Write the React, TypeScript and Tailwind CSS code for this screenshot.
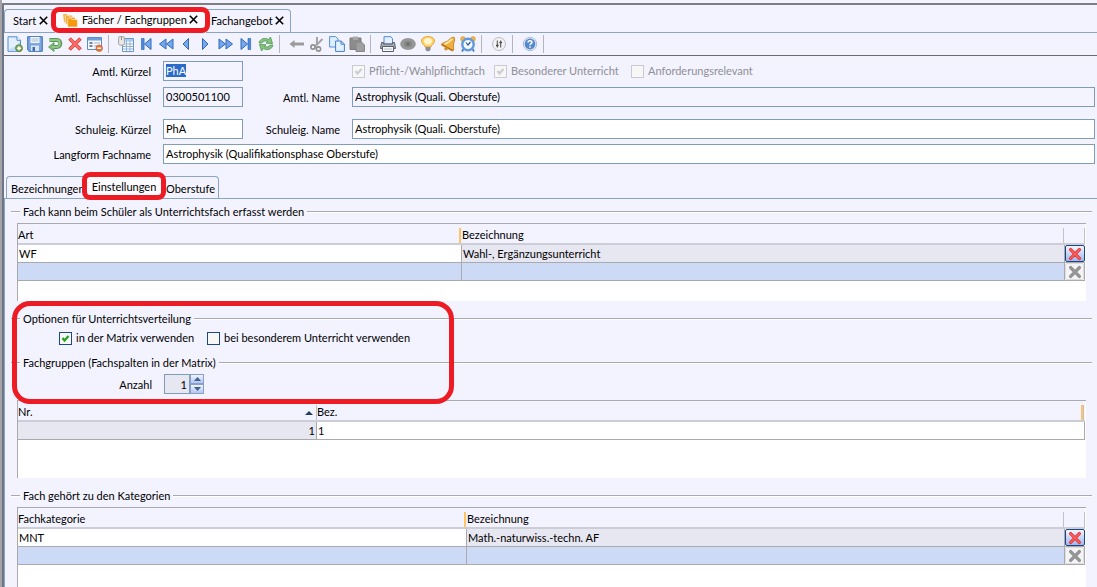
import { useEffect, useRef, type ReactNode } from "react";

function Icon({ children, size = 16 }: { children: ReactNode; size?: number }) {
  return (
    <svg viewBox="0 0 16 16" width={size} height={size} fill="none" aria-hidden="true" className="shrink-0">
      {children}
    </svg>
  );
}

const LIGHT = "#75a8ea";
const EDGE = "#2f68bd";

const icons: Record<string, ReactNode> = {
  Neu: (
    <>
      <path d="M1 .8h9l3.500 3.500v11H1z" fill="#e3effc" stroke="#4f8fd6" />
      <path d="M10 .8v3.500h3.500" fill="#fff" stroke="#4f8fd6" />
      <path d="M2 13c4-1 9-4 11-8v9.500H2z" fill="#c4dcf6" />
      <circle cx="12" cy="12.200" r="3.500" fill="#7fa860" stroke="#4c7f2c" strokeWidth=".7" />
      <path d="M12 10.200v4M10 12.200h4" stroke="#fff" strokeWidth="1.400" />
    </>
  ),
  Speichern: (
    <>
      <path d="M.7.7h14.600v14.600H2L.7 14z" fill="#7ba6e2" stroke="#3a6eb8" />
      <path d="M3.500 1h9v6h-9z" fill="#f4f8fd" />
      <path d="M4.500 3h7M4.500 5h7" stroke="#a9b9cc" />
      <path d="M4 9.500h8V15H4z" fill="#dbe5f0" />
      <path d="M5.500 11H8v4H5.500z" fill="#3e6ca8" />
    </>
  ),
  Rückgängig: (
    <>
      <path d="M2.500 4H10c4.500 0 4.500 7 0 7H6" stroke="#5b9457" strokeWidth="3.800" />
      <path d="M7 6.500v9L1.500 11z" fill="#7db676" stroke="#5b9457" strokeWidth=".8" />
      <path d="M3 4h7c4 0 4 7 0 7H5" stroke="#8fc787" strokeWidth="1.800" />
    </>
  ),
  Löschen: (
    <>
      <path d="M2.500 2.500l11 11M13.500 2.500l-11 11" stroke="#e04040" strokeWidth="3.600" />
      <path d="M3 3l10 10M13 3L3 13" stroke="#ff6f68" strokeWidth="1.800" />
    </>
  ),
  Eintrag: (
    <>
      <path d="M.5 1.500h14v12H.5z" fill="#f4f8fd" stroke="#5f8cc4" />
      <path d="M1 2h13v2.500H1z" fill="#6f9ed8" />
      <path d="M2.500 7h3M2.500 10h3" stroke="#4b5f80" strokeWidth="1.500" />
      <path d="M7 7h6M7 10h3" stroke="#a5b6cc" />
      <circle cx="12.200" cy="12.200" r="3.300" fill="#e0763e" stroke="#c25a2c" strokeWidth=".6" />
      <path d="M10.300 12.200h3.800" stroke="#fff" strokeWidth="1.400" />
    </>
  ),
  Tabelle: (
    <>
      <path d="M4.500 2.500h11v13h-11z" fill="#fff" stroke="#6b96cc" />
      <path d="M5 3h10v2.500H5z" fill="#a9c8ec" />
      <path d="M5 8h10M5 10.500h10M5 13h10M8.500 5v10M12 5v10" stroke="#8fb1da" />
      <rect x=".6" y=".6" width="5.800" height="8.500" rx="1.500" fill="#e9e9e9" stroke="#a2a2a2" />
      <path d="M3.500 1v3" stroke="#8c8c8c" />
    </>
  ),
  Anfang: (
    <>
      <path d="M3.500 2.500h2.600v11H3.500z" fill="#4f8bdc" stroke={EDGE} strokeWidth=".7" />
      <path d="M13 2.500v11L6.500 8z" fill={LIGHT} stroke={EDGE} />
    </>
  ),
  Zurückspulen: <path d="M8 3v10L1.500 8zM15 3v10L8.500 8z" fill={LIGHT} stroke={EDGE} />,
  Zurück: <path d="M10.500 2.500v11L5 8z" fill={LIGHT} stroke={EDGE} />,
  Vor: <path d="M4.500 2.500v11L10 8z" fill={LIGHT} stroke={EDGE} />,
  Vorspulen: <path d="M1 3v10l6.500-5zM8 3v10l6.500-5z" fill={LIGHT} stroke={EDGE} />,
  Ende: (
    <>
      <path d="M10 2.500h2.600v11H10z" fill="#4f8bdc" stroke={EDGE} strokeWidth=".7" />
      <path d="M3 2.500v11L9.500 8z" fill={LIGHT} stroke={EDGE} />
    </>
  ),
  Aktualisieren: (
    <>
      <path d="M1 7c.5-4 6-6 9.500-3.500L12.500 1l2 6.500-6.500-.3 1.800-1.700C7.500 4.500 4.500 5 4 7z" fill="#84c47c" stroke="#4f9650" strokeWidth=".8" />
      <path d="M15 9c-.5 4-6 6-9.500 3.500L3.500 15l-2-6.500 6.500.3-1.800 1.700C8.500 11.500 11.500 11 12 9z" fill="#84c47c" stroke="#4f9650" strokeWidth=".8" />
    </>
  ),
  Pfeil: <path d="M.5 8l5-4v2.500H15v3H5.500V12z" fill="#9b9b9b" />,
  Ausschneiden: (
    <>
      <path d="M8 1l-.2 8M13.500 3L6 10.500" stroke="#a3a3a3" strokeWidth="2" />
      <circle cx="4" cy="11" r="2.100" stroke="#8f8f8f" strokeWidth="1.600" />
      <circle cx="9.500" cy="13" r="2.100" stroke="#8f8f8f" strokeWidth="1.600" />
    </>
  ),
  Kopieren: (
    <>
      <path d="M.6.6h6L9 3v8H.6z" fill="#dfeefd" stroke="#5590d8" />
      <path d="M6.600 5h5.500l3.300 3v7.400H6.600z" fill="#e4f1fe" stroke="#3f7fd0" />
      <path d="M12 5v3.200h3.300" stroke="#3f7fd0" />
    </>
  ),
  Einfügen: (
    <>
      <path d="M1 2h11v11.500H1z" fill="#8c8c8c" stroke="#7c7c7c" />
      <path d="M4 .5h5V4H4z" fill="#a8a8a8" />
      <path d="M7 6h5.500L15.500 9v6.500H7z" fill="#9f9f9f" stroke="#868686" />
    </>
  ),
  Drucken: (
    <>
      <path d="M4 .7h7l1.500 2V8H4z" fill="#e3f0fd" stroke="#4f8ace" />
      <path d="M1.500 6.500h2V8h9V6.500h2l1 6h-15z" fill="#a4abb4" stroke="#5b626b" />
      <path d="M2.500 10.500h11v5h-11z" fill="#f6f8fa" stroke="#5b6168" />
      <path d="M4 13h8" stroke="#b9c0c8" />
    </>
  ),
  Ansicht: (
    <>
      <ellipse cx="8" cy="8" rx="7.800" ry="6" fill="#979797" />
      <ellipse cx="8" cy="8" rx="4" ry="3" fill="#858585" />
      <circle cx="8" cy="8" r="1.500" fill="#6f6f6f" />
    </>
  ),
  Tipp: (
    <>
      <path d="M8 .6c4 0 6.500 1.800 6.500 4.400 0 2.700-3 3.700-3.500 6H5c-.5-2.300-3.500-3.300-3.500-6C1.500 2.400 4 .6 8 .6z" fill="#ffd46b" stroke="#e3a53a" />
      <path d="M8 2C6 2 4 3.200 4 5.200c0 1 1 2 2 3h4c1-1 2-2 2-3C12 3.200 10 2 8 2z" fill="#fff6d0" />
      <path d="M5.500 11h5v3L9 15.200H7L5.500 14z" fill="#8a9099" />
    </>
  ),
  Erinnerung: (
    <>
      <path d="M13.500 1c-3 .8-4 2.500-6 4C5.500 6.400 3 6.500 1 8.500L13 15c1-1 .5-3 .5-5.500 0-3.500 1.500-5 1-7.500z" fill="#f0b040" stroke="#c58524" />
      <path d="M12.500 3C9 5 8 7 4.500 8.200" stroke="#ffe6a8" strokeWidth="1.800" />
      <path d="M2 8.800l10.500 5.700" stroke="#b87618" strokeWidth="1.600" />
      <circle cx="6" cy="12.800" r="1.700" fill="#d08e28" />
    </>
  ),
  Wecker: (
    <>
      <circle cx="3" cy="3" r="2.400" fill="#f2b443" stroke="#d8983a" strokeWidth=".6" />
      <circle cx="13" cy="3" r="2.400" fill="#f2b443" stroke="#d8983a" strokeWidth=".6" />
      <path d="M3.500 13l-1.500 2.500M12.500 13l1.500 2.500" stroke="#4a78b4" strokeWidth="1.800" />
      <circle cx="8" cy="8.500" r="5.700" fill="#f2f8fe" stroke="#5f9ade" strokeWidth="2.400" />
      <path d="M6 6.500l2 2.500 2.500-3" stroke="#32557f" strokeWidth="1.200" />
    </>
  ),
  Anpassen: (
    <>
      <circle cx="8" cy="8" r="6.500" fill="#f2f2f4" stroke="#bcbcc2" />
      <path d="M6.300 4.500v7M9.700 4.500v7" stroke="#4a4a4a" />
      <path d="M5 9.500h2.600M8.400 6.500H11" stroke="#4a4a4a" strokeWidth="1.600" />
    </>
  ),
  Hilfe: (
    <>
      <circle cx="8" cy="8" r="6.700" fill="#e8eef8" stroke="#a9bcd8" />
      <circle cx="8" cy="8" r="5.400" fill="#5588cc" />
      <path d="M6 6.500C6 4.200 10 4.200 10 6.300 10 7.600 8 7.600 8 9.200M8 10.200v1.500" stroke="#fff" strokeWidth="1.500" />
    </>
  ),
};

const toolGroups = [
  ["Neu", "Speichern", "Rückgängig", "Löschen", "Eintrag"],
  ["Tabelle", "Anfang", "Zurückspulen", "Zurück", "Vor", "Vorspulen", "Ende", "Aktualisieren"],
  ["Pfeil", "Ausschneiden", "Kopieren", "Einfügen"],
  ["Drucken", "Ansicht", "Tipp", "Erinnerung", "Wecker"],
  ["Anpassen"],
  ["Hilfe"],
];

function Toolbar() {
  return (
    <div className="flex h-[23px] items-center border-b border-[#6b6b70] pl-px">
      {toolGroups.map((group) => (
        <div key={group[0]} className="flex items-center">
          {group.map((name) => (
            <button key={name} type="button" aria-label={name} className="flex h-5 w-5 items-center justify-center">
              <Icon>{icons[name]}</Icon>
            </button>
          ))}
          <span className="mr-[7px] ml-[3px] h-[18px] w-px bg-[#b4b4ba]" />
        </div>
      ))}
    </div>
  );
}

function CloseButton({ label }: { label: string }) {
  return (
    <button type="button" aria-label={label} className="ml-0.5 flex h-4 w-2.5 items-start justify-center pt-[3px]">
      <svg viewBox="0 0 9 9" width="9" height="9" aria-hidden="true" className="shrink-0">
        <path d="M.8.8l7.400 7.400M8.200.8L.8 8.200" stroke="#000" strokeWidth="1.600" />
      </svg>
    </button>
  );
}

function Marker({ className }: { className: string }) {
  return <span aria-hidden="true" className={`pointer-events-none absolute z-10 border-[5px] border-[#ed1c24] ${className}`} />;
}

function WindowTabs() {
  return (
    <div className="flex h-7 items-end border-b border-[#8aa4c2]">
      <div className="flex h-[23px] w-[51px] items-center rounded-t-sm border-t border-l border-[#8aa4c2] pl-2">
        <a href="#start">Start</a>
        <CloseButton label="Start schließen" />
      </div>
      <div className="relative -mb-px flex h-6 w-[151px] items-center bg-[#fbfbff] pb-0.5 pl-2">
        <svg viewBox="0 0 16 14" width="15" height="13" aria-hidden="true">
          <path d="M0 0h4l1 1.500h5V9H1z" fill="#f9b54a" />
          <path d="M2.500 2h4l1 1.500h5.500V11h-10z" fill="#f7a21f" stroke="#fff" strokeWidth=".6" />
          <path d="M5 4.500h3.500l1 1.500h6V14H5z" fill="#f59a0c" stroke="#fff" strokeWidth=".6" />
        </svg>
        <a href="#faecher" className="ml-1">Fächer / Fachgruppen</a>
        <CloseButton label="Fächer / Fachgruppen schließen" />
        <Marker className="-inset-x-1 -top-0.5 bottom-0 rounded-lg" />
      </div>
      <div className="flex h-[23px] items-center rounded-tr-sm border-t border-r border-[#8aa4c2] pr-[5px] pl-[5px]">
        <a href="#fachangebot">Fachangebot</a>
        <CloseButton label="Fachangebot schließen" />
      </div>
    </div>
  );
}

function Field({ id, label, value, labelClass, inputClass, readOnly, selected }: {
  id: string;
  label: string;
  value: string;
  labelClass: string;
  inputClass: string;
  readOnly?: boolean;
  selected?: boolean;
}) {
  const ref = useRef<HTMLInputElement>(null);
  useEffect(() => {
    if (selected) {
      ref.current?.focus();
      ref.current?.select();
    }
  }, [selected]);
  return (
    <>
      <label htmlFor={id} className={`mr-3 shrink-0 pt-0.5 text-right whitespace-pre ${labelClass}`}>{label}</label>
      <input
        ref={ref}
        id={id}
        defaultValue={value}
        readOnly={readOnly}
        className={`h-5 rounded-none border border-[#7f9db9] px-0.5 pb-0.5 outline-none selection:bg-[#2a6ac8] selection:text-white ${readOnly ? "bg-[#f3f4ff]" : "bg-white"} ${inputClass}`}
      />
    </>
  );
}

function Check({ label, checked, disabled, width }: { label: string; checked?: boolean; disabled?: boolean; width: string }) {
  return (
    <label className={`flex items-center gap-1 whitespace-nowrap ${disabled ? "text-[#8f8f94]" : ""} ${width}`}>
      <span className="grid shrink-0">
        <input
          type="checkbox"
          defaultChecked={checked}
          disabled={disabled}
          className={`peer col-start-1 row-start-1 h-[13px] w-[13px] appearance-none border bg-[#f7f7f5] ${disabled ? "border-[#cacad2]" : "border-[#1c4a80]"}`}
        />
        <svg viewBox="0 0 13 13" width="13" height="13" aria-hidden="true" className="pointer-events-none invisible col-start-1 row-start-1 peer-checked:visible">
          <path d="M3.500 6l2 2.500 4-4.500" fill="none" stroke={disabled ? "#cdcdd6" : "#21a121"} strokeWidth="2.200" />
        </svg>
      </span>
      {label}
    </label>
  );
}

function MasterForm() {
  return (
    <form className="flex flex-col pt-[5px] pr-0.5">
      <div className="flex items-center">
        <Field id="kuerzel" label="Amtl. Kürzel" value="PhA" labelClass="w-[147px]" inputClass="w-20" readOnly selected />
        <div className="ml-[109px] flex">
          <Check label="Pflicht-/Wahlpflichtfach" checked disabled width="w-[142px]" />
          <Check label="Besonderer Unterricht" checked disabled width="w-[137px]" />
          <Check label="Anforderungsrelevant" disabled width="w-auto" />
        </div>
      </div>
      <div className="mt-1.5 flex items-center">
        <Field id="schluessel" label="Amtl.  Fachschlüssel" value="0300501100" labelClass="w-[147px]" inputClass="w-20" readOnly />
        <Field id="name" label="Amtl. Name" value="Astrophysik (Quali. Oberstufe)" labelClass="w-[97px]" inputClass="min-w-0 flex-1" readOnly />
      </div>
      <div className="mt-3 flex items-center">
        <Field id="skuerzel" label="Schuleig. Kürzel" value="PhA" labelClass="w-[147px]" inputClass="w-20" />
        <Field id="sname" label="Schuleig. Name" value="Astrophysik (Quali. Oberstufe)" labelClass="w-[97px]" inputClass="min-w-0 flex-1" />
      </div>
      <div className="mt-[5px] flex items-center">
        <Field id="langform" label="Langform Fachname" value="Astrophysik (Qualifikationsphase Oberstufe)" labelClass="w-[147px]" inputClass="min-w-0 flex-1" />
      </div>
    </form>
  );
}

function DetailTabs() {
  return (
    <div className="mt-[11px] flex h-6 items-end border-b border-[#8aa4c2] pl-0.5">
      <a href="#bezeichnungen" className="flex h-[22px] w-20 items-center overflow-hidden rounded-tl-sm border-t border-l border-[#8aa4c2] pt-0.5 pl-1">
        Bezeichnungen
      </a>
      <div className="relative -mb-px h-6 w-[76px] border-t-2 border-[#3b7bea] bg-[#fbfbff]">
        <a href="#einstellungen" className="flex h-5 items-center justify-center">Einstellungen</a>
        <Marker className="-inset-x-1 -top-[5px] -bottom-px rounded-lg" />
      </div>
      <a href="#oberstufe" className="flex h-[22px] items-center rounded-tr-sm border-t border-r border-[#8aa4c2] pt-0.5 pr-[3px] pl-1">
        Oberstufe
      </a>
    </div>
  );
}

function Legend({ children }: { children: ReactNode }) {
  return (
    <h2 className="flex h-4 items-center gap-[3px] pr-[5px] pl-1.5 whitespace-nowrap">
      <span className="h-0.5 w-[9px] border-t border-[#a9a9b0] bg-white" />
      {children}
      <span className="h-0.5 flex-1 border-t border-[#a9a9b0] bg-white" />
    </h2>
  );
}

function Cross({ muted }: { muted?: boolean }) {
  return (
    <Icon size={14}>
      <path d="M3 3l10 10M13 3L3 13" stroke={muted ? "#8d8d8d" : "#e63a3c"} strokeWidth="3.800" strokeLinecap="round" />
      <path d="M3 3l10 10M13 3L3 13" stroke={muted ? "#9a9a9a" : "#ff6464"} strokeWidth="1.600" strokeLinecap="round" />
    </Icon>
  );
}

const headCell = "h-[21px] border-b-2 border-[#cdcdd8] bg-[#f3f3ff] p-0 pt-0.5 text-left align-top font-normal";

function EntryTable({ headers, row, firstWidth }: { headers: [string, string]; row: [string, string]; firstWidth: string }) {
  return (
    <table className="w-full table-fixed border-separate border-spacing-0">
      <colgroup>
        <col className={firstWidth} />
        <col />
        <col className="w-5" />
      </colgroup>
      <thead>
        <tr>
          <th className={headCell}>
            <div className="flex h-[17px] items-end justify-between">
              {headers[0]}
              <span className="mr-px h-[15px] w-0.5 bg-[#ffc466]" />
            </div>
          </th>
          <th className={headCell}>
            <div className="flex h-[17px] items-end justify-between">
              {headers[1]}
              <span className="mr-px h-[15px] w-px bg-[#c0c0c8]" />
            </div>
          </th>
          <th className={headCell}>
            <div className="flex h-[17px] items-end justify-end">
              <span className="h-[15px] w-px bg-[#c0c0c8]" />
            </div>
          </th>
        </tr>
      </thead>
      <tbody>
        <tr>
          <td className="h-[18px] border-r border-b border-[#a9a9ae] bg-white p-0 pl-px">{row[0]}</td>
          <td className="h-[18px] border-r border-b border-[#a9a9ae] bg-[#e7e7f1] p-0 pl-px">{row[1]}</td>
          <td className="h-[18px] border-b border-[#a9a9ae] p-0">
            <button type="button" aria-label="Zeile löschen" className="flex h-[17px] w-full items-center justify-center rounded-xs border border-[#1c4480] bg-linear-to-b from-[#f2f6ff] to-[#9fb8ee]">
              <Cross />
            </button>
          </td>
        </tr>
        <tr>
          <td className="h-[18px] border-r border-b border-[#a9a9ae] bg-[#ccdaf6] p-0" />
          <td className="h-[18px] border-r border-b border-[#a9a9ae] bg-[#ccdaf6] p-0" />
          <td className="h-[18px] border-r border-b border-[#a9a9ae] p-0">
            <button type="button" aria-label="Leere Zeile löschen" disabled className="flex h-[17px] w-full items-center justify-center rounded-xs border border-[#dcdce2] bg-[#f4f4f6]">
              <Cross muted />
            </button>
          </td>
        </tr>
      </tbody>
    </table>
  );
}

const tableBox = "mr-[11px] ml-3 border-t border-l border-[#a9a9b0] bg-white pr-px";

export default function App() {
  return (
    <main className="flex min-h-screen flex-col border-l-2 border-[#a3a3a8] bg-[#f3f3ff] font-['Lato','Noto_Sans',sans-serif] text-[11px] leading-4 text-black">
      <div className="h-[5px] border-b-2 border-[#7d7d84]" />
      <div className="flex flex-1 flex-col border-l-2 border-[#6c7686]">
        <WindowTabs />
        <Toolbar />
        <MasterForm />
        <DetailTabs />
        <section className="flex flex-1 flex-col border-l border-[#8aa4c2] pt-[5px]">
          <Legend>Fach kann beim Schüler als Unterrichtsfach erfasst werden</Legend>
          <div className={`${tableBox} mt-[3px] h-[78px]`}>
            <EntryTable headers={["Art", "Bezeichnung"]} row={["WF", "Wahl-, Ergänzungsunterricht"]} firstWidth="w-[444px]" />
          </div>

          <div className="relative mt-2.5">
            <Legend>Optionen für Unterrichtsverteilung</Legend>
            <div className="mt-[3px] flex pl-[54px]">
              <Check label="in der Matrix verwenden" checked width="w-[148px]" />
              <Check label="bei besonderem Unterricht verwenden" width="w-auto" />
            </div>
            <div className="mt-[9px]">
              <Legend>Fachgruppen (Fachspalten in der Matrix)</Legend>
            </div>
            <div className="mt-[3px] flex items-center">
              <label htmlFor="anzahl" className="mr-3 w-[147px] pt-0.5 text-right">Anzahl</label>
              <div className="flex h-5">
                <input id="anzahl" defaultValue="1" inputMode="numeric" className="h-5 w-[26px] rounded-none border border-[#7f9db9] bg-[#e7e7f1] px-0.5 text-right outline-none" />
                <div className="flex w-3.5 flex-col">
                  <button type="button" aria-label="Mehr" className="flex h-2.5 items-center justify-center border border-[#8aa0cc] bg-linear-to-b from-[#f0f4ff] to-[#b4c6f0]">
                    <svg viewBox="0 0 7 4" width="7" height="4" aria-hidden="true"><path d="M0 4L3.500 0 7 4z" fill="#41608c" /></svg>
                  </button>
                  <button type="button" aria-label="Weniger" className="flex h-2.5 items-center justify-center border border-[#8aa0cc] bg-linear-to-b from-[#f0f4ff] to-[#b4c6f0]">
                    <svg viewBox="0 0 7 4" width="7" height="4" aria-hidden="true"><path d="M0 0h7L3.500 4z" fill="#41608c" /></svg>
                  </button>
                </div>
              </div>
            </div>
            <Marker className="-top-2.5 -bottom-2.5 left-[7px] w-[442px] rounded-[18px]" />
          </div>

          <div className={`${tableBox} mt-1.5 h-[78px]`}>
            <table className="w-full table-fixed border-separate border-spacing-0">
              <colgroup>
                <col className="w-[299px]" />
                <col />
              </colgroup>
              <thead>
                <tr>
                  <th className={headCell}>
                    <div className="flex h-[17px] items-end justify-between">
                      Nr.
                      <span className="flex h-[15px] items-center border-r border-[#c0c0c8] pr-[3px]">
                        <svg viewBox="0 0 8 4" width="8" height="4" aria-hidden="true"><path d="M0 4l4-4 4 4z" fill="#1f3f63" /></svg>
                      </span>
                    </div>
                  </th>
                  <th className={headCell}>
                    <div className="flex h-[17px] items-end justify-between">
                      Bez.
                      <span className="mr-px h-[15px] w-[3px] border-r border-[#c0c0c8] bg-[#ffc466]" />
                    </div>
                  </th>
                </tr>
              </thead>
              <tbody>
                <tr>
                  <td className="h-[18px] border-r border-b border-[#a9a9ae] bg-[#e7e7f1] p-0 pr-px text-right">1</td>
                  <td className="h-[18px] border-r border-b border-[#a9a9ae] bg-white p-0 pl-px">1</td>
                </tr>
              </tbody>
            </table>
          </div>

          <div className="mt-2.5">
            <Legend>Fach gehört zu den Kategorien</Legend>
          </div>
          <div className={`${tableBox} mt-[3px] flex-1`}>
            <EntryTable headers={["Fachkategorie", "Bezeichnung"]} row={["MNT", "Math.-naturwiss.-techn. AF"]} firstWidth="w-[449px]" />
          </div>
        </section>
      </div>
    </main>
  );
}
